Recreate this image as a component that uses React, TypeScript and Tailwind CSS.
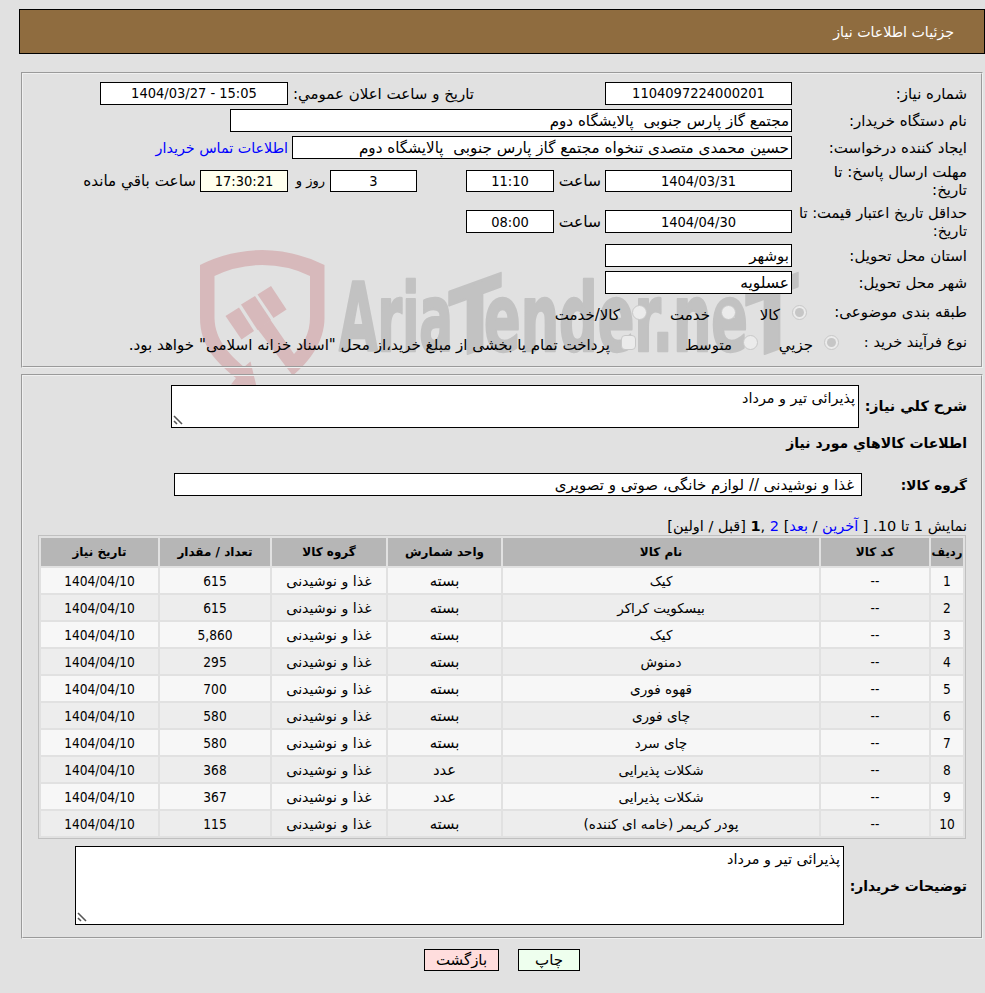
import React from 'react';

interface FieldProps {
  className?: string;
  children?: React.ReactNode;
}

interface NeedItem {
  name: string;
  unit: string;
  amount: string;
}

const items: NeedItem[] = [
  { name: 'کیک', unit: 'بسته', amount: '615' },
  { name: 'بیسکویت کراکر', unit: 'بسته', amount: '615' },
  { name: 'کیک', unit: 'بسته', amount: '5,860' },
  { name: 'دمنوش', unit: 'بسته', amount: '295' },
  { name: 'قهوه فوری', unit: 'بسته', amount: '700' },
  { name: 'چای فوری', unit: 'بسته', amount: '580' },
  { name: 'چای سرد', unit: 'بسته', amount: '580' },
  { name: 'شکلات پذیرایی', unit: 'عدد', amount: '368' },
  { name: 'شکلات پذیرایی', unit: 'عدد', amount: '367' },
  { name: 'پودر کریمر (خامه ای کننده)', unit: 'بسته', amount: '115' },
];

const Field: React.FC<FieldProps> = ({ className = '', children }) => (
  <div className={`flex items-center h-[23px] shrink-0 border border-black bg-white px-[2px] whitespace-pre ${className}`}>
    {children}
  </div>
);

const NumberField: React.FC<FieldProps> = ({ className = 'bg-white', children }) => (
  <div
    dir="ltr"
    className={`flex items-center justify-center shrink-0 border border-black text-[14.5px] font-['DejaVu_Sans_Condensed','DejaVu_Sans',sans-serif] ${className}`}
  >
    {children}
  </div>
);

const Label: React.FC<FieldProps> = ({ className = 'w-[175px]', children }) => (
  <div className={`shrink-0 leading-[18px] whitespace-nowrap ${className}`}>{children}</div>
);

// Etched frame: dark line outside, light line inside
const Panel: React.FC<FieldProps> = ({ className = '', children }) => (
  <div className={`w-[962px] border border-t-[#9a9a9a] border-l-[#9a9a9a] border-b-[#f0f0f0] border-r-[#f0f0f0] ${className}`}>
    <div className="h-full border border-t-[#f0f0f0] border-l-[#f0f0f0] border-b-[#9a9a9a] border-r-[#9a9a9a] pr-[14px]">
      {children}
    </div>
  </div>
);

const Radio: React.FC<{ checked?: boolean }> = ({ checked = false }) => (
  <span className="flex items-center justify-center w-[15px] h-[15px] shrink-0 rounded-full border border-[#c8c8c8] bg-[#ebebeb]">
    {checked && <span className="w-[9px] h-[9px] rounded-full bg-[#c6c6c6]"></span>}
  </span>
);

const ResizeGrip = () => (
  <svg className="absolute left-px bottom-[2px]" width="10" height="10" viewBox="0 0 10 10" stroke="#555" strokeWidth="1.6">
    <path d="M1 1L9 9M1 6L4 9" />
  </svg>
);

const Watermark = () => (
  <svg className="absolute left-0 top-0" width="985" height="993" viewBox="0 0 985 993" direction="ltr">
    <g fill="#d7b9bb">
      {/* left half of the shield with the arrow head */}
      <path d="M263 250Q230 250 200 265V318C200 346 217 363 236 378L231 384.500L256.500 386.500L250.500 361.500L244 367C229 354 215 340 214.500 318V276Q237 265 263 265Z" />
      {/* right half, running into the gavel handle */}
      <path d="M262 250Q294 250 324.500 265V318C324.500 342 309 362 292.700 375.500L257.500 329L270.500 320L294 354C303 345 310 334 310 317V276Q288 265 262 265Z" />
      <path d="M225.500 316L239 307.500L254 331L241.500 339.500Z" />
      <path d="M241 304.500L255 296L271 320L257.500 330Z" />
      <path d="M257.500 294.500L271 286L286.500 309.500L273.500 318Z" />
    </g>
    <g
      fill="#c2c2c2"
      stroke="#c2c2c2"
      strokeWidth="2.5"
      strokeLinejoin="round"
      fontFamily="'DejaVu Sans Condensed', 'DejaVu Sans', sans-serif"
      fontWeight="bold"
      fontSize="94"
    >
      <text x="339" y="351" textLength="114" lengthAdjust="spacingAndGlyphs">Aria</text>
      <text transform="translate(475 351) skewY(-20)" textAnchor="middle" textLength="52" lengthAdjust="spacingAndGlyphs">T</text>
      <text x="484" y="351" textLength="264" lengthAdjust="spacingAndGlyphs">ender.ne</text>
      <text transform="translate(772 351) skewY(-20)" textAnchor="middle" textLength="52" lengthAdjust="spacingAndGlyphs">T</text>
    </g>
  </svg>
);

const InfoPanel = () => (
  <Panel className="h-[296px]">
    <div className="h-[6px]"></div>
    <div className="flex items-center h-[27px]">
      <Label>شماره نیاز:</Label>
      <NumberField className="w-[187px] h-[23px] pb-px bg-white">1104097224000201</NumberField>
      <span className="w-[317px] pr-[131px] whitespace-nowrap">تاریخ و ساعت اعلان عمومي:</span>
      <NumberField className="w-[188px] h-[23px] pb-px bg-white">1404/03/27 - 15:05</NumberField>
    </div>
    <div className="flex items-center h-[27px]">
      <Label>نام دستگاه خریدار:</Label>
      <Field className="w-[562px] text-[15.1px]">مجتمع گاز پارس جنوبی  پالایشگاه دوم</Field>
    </div>
    <div className="flex items-center h-[27px]">
      <Label>ایجاد کننده درخواست:</Label>
      <Field className="w-[500px] text-[15.2px]">حسین محمدی متصدی تنخواه مجتمع گاز پارس جنوبی  پالایشگاه دوم</Field>
      <a className="mr-1 text-[14.3px] text-[#0000ff] whitespace-nowrap">اطلاعات تماس خریدار</a>
    </div>
    <div className="flex items-center h-[40px]">
      <Label>مهلت ارسال پاسخ: تا<br />تاریخ:</Label>
      <NumberField className="w-[187px] h-[22px] bg-white">1404/03/31</NumberField>
      <span className="w-[51px] pr-1 text-[15.5px]">ساعت</span>
      <NumberField className="w-[88px] h-[22px] bg-white">11:10</NumberField>
      <NumberField className="w-[87px] h-[22px] mr-[49px] bg-white">3</NumberField>
      <span className="w-[42px] pr-[5px] text-[13px] whitespace-nowrap">روز و</span>
      <NumberField className="w-[88px] h-[22px] bg-[#ffffee]">17:30:21</NumberField>
      <span className="pr-1 text-[15.2px] whitespace-nowrap">ساعت باقي مانده</span>
    </div>
    <div className="flex items-center h-[41px]">
      <Label className="w-[175px] text-[14.7px]">حداقل تاریخ اعتبار قیمت: تا<br />تاریخ:</Label>
      <NumberField className="w-[187px] h-[23px] bg-white">1404/04/30</NumberField>
      <span className="w-[51px] pr-1 text-[15.5px]">ساعت</span>
      <NumberField className="w-[88px] h-[23px] bg-white">08:00</NumberField>
    </div>
    <div className="flex items-center h-[27px]">
      <Label>استان محل تحویل:</Label>
      <Field className="w-[187px]">بوشهر</Field>
    </div>
    <div className="flex items-center h-[27px]">
      <Label>شهر محل تحویل:</Label>
      <Field className="w-[187px] text-[15.5px]">عسلویه</Field>
    </div>
    <div className="flex items-center h-[32px]">
      <Label className="w-[160px]">طبقه بندی موضوعی:</Label>
      <Radio checked />
      <span className="w-[56px] pr-[12px] pt-[5px]">کالا</span>
      <Radio />
      <span className="w-[74px] pr-[11px] pt-[5px]">خدمت</span>
      <Radio />
      <span className="pr-[12px] pt-[5px] whitespace-nowrap">کالا/خدمت</span>
    </div>
    <div className="flex items-center h-[28px]">
      <Label className="w-[128px] text-[14.6px]">نوع فرآیند خرید :</Label>
      <Radio checked />
      <span className="w-[66px] pr-[11px] pt-[5px]">جزیي</span>
      <Radio />
      <span className="w-[107px] pr-[11px] pt-[5px]">متوسط</span>
      <span className="w-[15px] h-[15px] shrink-0 rounded-sm border border-[#c8c8c8] bg-[#ebebeb]"></span>
      <span className="pr-[11px] pt-[5px] text-[15.1px] whitespace-nowrap">پرداخت تمام یا بخشی از مبلغ خرید،از محل "اسناد خزانه اسلامی" خواهد بود.</span>
    </div>
  </Panel>
);

const ItemsTable = () => (
  <table className="w-[928px] mr-px table-fixed border border-[#c0c0c0] border-separate border-spacing-[2px] text-center text-[13.6px]">
    <thead>
      <tr className="h-7 bg-[#b6b6b6] text-[12px] font-bold whitespace-nowrap">
        <th className="w-[32px] p-0 text-[11.6px]">ردیف</th>
        <th className="w-[108px] p-0">کد کالا</th>
        <th className="w-[316px] p-0">نام کالا</th>
        <th className="w-[113px] p-0">واحد شمارش</th>
        <th className="w-[114px] p-0">گروه کالا</th>
        <th className="w-[110px] p-0">تعداد / مقدار</th>
        <th className="p-0">تاریخ نیاز</th>
      </tr>
    </thead>
    <tbody>
      {items.map((item, index) => (
        <tr key={index} className="h-[25px] leading-5 odd:bg-[#f7f7f7] even:bg-[#ededed]">
          <td className="p-0 font-['DejaVu_Sans_Condensed',sans-serif]">{index + 1}</td>
          <td className="p-0 font-['DejaVu_Sans_Condensed',sans-serif]">--</td>
          <td className="p-0">{item.name}</td>
          <td className="p-0 text-[14.8px]">{item.unit}</td>
          <td className="p-0 text-[14.2px]">غذا و نوشیدنی</td>
          <td className="p-0 font-['DejaVu_Sans_Condensed',sans-serif]">{item.amount}</td>
          <td className="p-0 font-['DejaVu_Sans_Condensed',sans-serif]">1404/04/10</td>
        </tr>
      ))}
    </tbody>
  </table>
);

const GoodsPanel = () => (
  <Panel className="mt-[6px] h-[565px]">
    <div className="flex items-center h-[43px] mt-[9px]">
      <span className="w-[108px] shrink-0 pb-px text-[14.3px] font-bold whitespace-nowrap">شرح کلي نیاز:</span>
      <div className="relative w-[688px] h-[43px] shrink-0 border border-black bg-white px-[3px] pt-[2px] text-[14.4px] leading-5">
        پذیرائی تیر و مرداد
        <ResizeGrip />
      </div>
    </div>
    <div className="h-[30px] text-[14px] leading-[30px] font-bold">اطلاعات کالاهاي مورد نیاز</div>
    <div className="flex items-center h-[23px] mt-[15px]">
      <span className="w-[105px] shrink-0 text-[13.6px] font-bold">گروه کالا:</span>
      <Field className="w-[688px] pr-[7px]">غذا و نوشیدنی // لوازم خانگی، صوتی و تصویری</Field>
    </div>
    <div className="mt-[21px] h-[18px] text-[14.5px] leading-[18px] whitespace-nowrap">
      نمایش 1 تا 10. [ <a className="text-[#0000ff]">آخرین</a> / <a className="text-[#0000ff]">بعد</a>] <a className="text-[#0000ff]">2</a> ,<b>1</b> [قبل / اولین]
    </div>
    <ItemsTable />
    <div className="flex items-center mt-[7px]">
      <span className="w-[123px] shrink-0 text-[13.9px] font-bold whitespace-nowrap">توضیحات خریدار:</span>
      <div className="relative w-[769px] h-[79px] shrink-0 border border-black bg-white px-[3px] pt-[2px] text-[14.4px] leading-5">
        پذیرائی تیر و مرداد
        <ResizeGrip />
      </div>
    </div>
  </Panel>
);

export default function App() {
  return (
    <div
      dir="rtl"
      className="relative w-[985px] h-[993px] overflow-hidden bg-[#e1e1e1] text-black text-[15px] leading-5 font-['DejaVu_Sans',sans-serif]"
    >
      <Watermark />
      <div className="relative pt-[9px]">
        <div className="flex items-center w-[966px] h-[45px] border border-black bg-[#8f6c3f] pr-[30px] text-[14.2px] text-white">
          جزئیات اطلاعات نیاز
        </div>
        <div className="pt-[18px] pr-[2px]">
          <InfoPanel />
          <GoodsPanel />
        </div>
        <div className="flex gap-[19px] mt-[10px] pr-[405px]">
          <button className="w-[62px] h-[22px] border border-black bg-[#eeffee] leading-5">چاپ</button>
          <button className="w-[75px] h-[22px] border border-black bg-[#ffdddd] leading-5">بازگشت</button>
        </div>
      </div>
    </div>
  );
}
